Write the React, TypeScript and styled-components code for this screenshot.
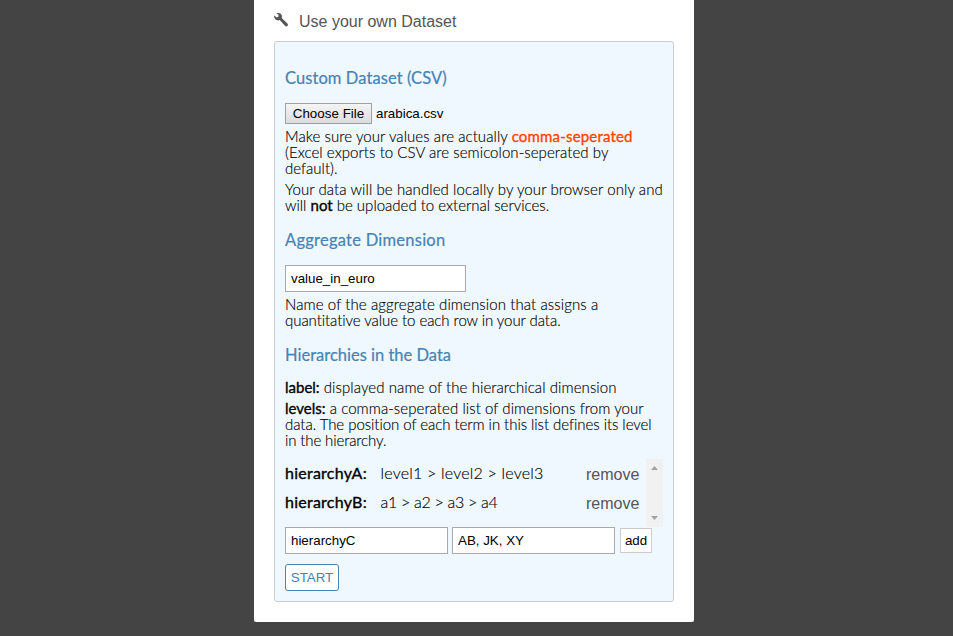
import React from 'react';
import styled, { createGlobalStyle } from 'styled-components';

const GlobalStyle = createGlobalStyle`
  * { box-sizing: border-box; }
  body { margin: 0; height: 636px; background: #444; overflow: hidden; }
`;

const sans = '"Liberation Sans", Arial, sans-serif';
const display = 'Lato, "Open Sans", sans-serif';

const Card = styled.main`
  width: 440px;
  height: 622px;
  margin: 0 auto 0 254px;
  padding: 0 20px;
  background: #fff;
  border-radius: 0 0 2px 2px;
`;

const TitleBar = styled.header`
  display: flex;
  height: 41px;
  color: #555;
  font: 16px/18px ${sans};
`;

const Wrench = styled.svg`
  width: 14px;
  height: 14px;
  margin: 13px 11px 0 0;
  flex: none;
`;

const Title = styled.span`
  margin-top: 13px;
`;

const Panel = styled.section`
  height: 561px;
  padding: 0 10px;
  border: 1px solid #ccc;
  border-radius: 3px;
  background: #f0f8ff;
`;

const Heading = styled.h2<{ $track: number; $top: number; $bottom?: number }>`
  margin: ${p => p.$top}px 0 ${p => p.$bottom ?? 15}px;
  font: 400 16.5px/20px ${display};
  letter-spacing: ${p => p.$track}px;
  color: #4682b4;
  -webkit-text-stroke: 0.2px #4682b4;
`;

const Paragraph = styled.p`
  margin: 4px 0 0;
  padding-bottom: 1px;
  font: 300 15px/16px ${display};
  color: #000;
  white-space: nowrap;
  -webkit-text-stroke: 0.15px #000;
`;

const Line = styled.span<{ $track?: number }>`
  display: block;
  height: 16px;
  letter-spacing: ${p => p.$track ?? 0}px;
`;

const Strong = styled.strong<{ $alert?: boolean; $track?: number }>`
  font-weight: 400;
  letter-spacing: ${p => p.$track ?? 0.1}px;
  color: ${p => (p.$alert ? '#ff4500' : '#000')};
  -webkit-text-stroke: 0.35px ${p => (p.$alert ? '#ff4500' : '#000')};
`;

const FileRow = styled.div`
  display: flex;
  height: 21px;
  font: 13.33px/22px ${sans};
  color: #000;
`;

const FileButton = styled.button`
  width: 87px;
  height: 21px;
  margin-right: 4px;
  padding: 0;
  border: 1px solid #a0a0a0;
  background: linear-gradient(#f5f5f5, #dcdcdc);
  color: #000;
  font: 13.33px/19px ${sans};
  letter-spacing: 0.04px;
`;

const TextInput = styled.input<{ $width: number }>`
  display: block;
  width: ${p => p.$width}px;
  height: 27px;
  padding: 0 5px;
  border: 1px solid #a9a9a9;
  border-radius: 0;
  outline: 0;
  background: #fff;
  color: #000;
  font: 13.33px ${sans};
`;

const ListBox = styled.div`
  display: flex;
  height: 68px;
  margin-top: 10px;
`;

const List = styled.div`
  flex: 1;
`;

const Item = styled.div`
  display: grid;
  grid-template-columns: 95.5px 205.5px 1fr;
  height: 29px;
  padding-bottom: 2px;
  align-items: center;
  font: 300 16px/20px ${display};
  white-space: nowrap;
  color: #000;
  -webkit-text-stroke: 0.15px #000;
`;

const Levels = styled.span<{ $track: number }>`
  letter-spacing: ${p => p.$track}px;
`;

const Remove = styled.span`
  font: 16px/20px ${sans};
  color: #555;
  -webkit-text-stroke: 0;
  padding-top: 4px;
`;

const Scrollbar = styled.div`
  display: flex;
  flex-direction: column;
  justify-content: space-between;
  align-items: center;
  width: 17px;
  padding: 7px 0;
  background: #f1f1f1;
`;

const Arrow = styled.svg`
  display: block;
  width: 7px;
  height: 4px;
  fill: #a3a3a3;
`;

const AddRow = styled.div`
  display: flex;
  gap: 4px;
  align-items: center;
`;

const AddButton = styled.button`
  width: 32px;
  height: 25px;
  margin-left: 1px;
  padding: 0;
  border: 1px solid #ccc;
  background: #fff;
  color: #000;
  font: 13.33px ${sans};
`;

const StartButton = styled.button`
  display: block;
  width: 54px;
  height: 27px;
  margin-top: 10px;
  padding: 0;
  border: 1px solid #4682b4;
  border-radius: 3px;
  background: #fff;
  color: #4682b4;
  font: 13.33px ${sans};
`;

const hierarchies = [
  { label: 'hierarchyA:', levels: 'level1 > level2 > level3', track: 0.2 },
  { label: 'hierarchyB:', levels: 'a1 > a2 > a3 > a4', track: -0.29 },
];

export default function App() {
  return (
    <>
      <GlobalStyle />
      <Card>
        <TitleBar>
          <Wrench viewBox="0 0 14 14">
            <path
              fill="#555"
              d="M.3 2.5 2.8 4.6 4.6 3.5 4.5 1.7 2.4.2C4.2-.4 6.500.1 7.500 1.800 8.100 2.900 8.100 4 7.700 5L13.400 10.400C14.200 11.200 14 12.300 13.400 12.900 12.700 13.600 11.700 13.500 11 12.800L5.700 7.100C4.100 7.700 2.400 7.300 1.300 6.200.300 5.200 0 3.800.300 2.500Z"
            />
          </Wrench>
          <Title>Use your own Dataset</Title>
        </TitleBar>
        <Panel>
          <Heading $top={26} $track={0.08}>Custom Dataset (CSV)</Heading>
          <FileRow>
            <FileButton>Choose File</FileButton>
            <span>arabica.csv</span>
          </FileRow>
          <Paragraph>
            <Line $track={0.07}>
              Make sure your values are actually <Strong $alert $track={0.18}>comma-seperated</Strong>
            </Line>
            <Line $track={0.06}>(Excel exports to CSV are semicolon-seperated by</Line>
            <Line>default).</Line>
          </Paragraph>
          <Paragraph>
            <Line $track={0.09}>Your data will be handled locally by your browser only and</Line>
            <Line>will <Strong $track={0}>not</Strong> be uploaded to external services.</Line>
          </Paragraph>
          <Heading $top={16} $track={0.25}>Aggregate Dimension</Heading>
          <TextInput $width={181} defaultValue="value_in_euro" />
          <Paragraph>
            <Line $track={0.1}>Name of the aggregate dimension that assigns a</Line>
            <Line $track={-0.06}>quantitative value to each row in your data.</Line>
          </Paragraph>
          <Heading $top={16} $bottom={14} $track={0}>Hierarchies in the Data</Heading>
          <Paragraph>
            <Line $track={0.08}>
              <Strong $track={0}>label:</Strong> displayed name of the hierarchical dimension
            </Line>
          </Paragraph>
          <Paragraph>
            <Line $track={0.07}>
              <Strong $track={0}>levels:</Strong> a comma-seperated list of dimensions from your
            </Line>
            <Line $track={-0.05}>data. The position of each term in this list defines its level</Line>
            <Line $track={-0.12}>in the hierarchy.</Line>
          </Paragraph>
          <ListBox>
            <List>
              {hierarchies.map(h => (
                <Item key={h.label}>
                  <Strong $track={0.25}>{h.label}</Strong>
                  <Levels $track={h.track}>{h.levels}</Levels>
                  <Remove>remove</Remove>
                </Item>
              ))}
            </List>
            <Scrollbar>
              <Arrow viewBox="0 0 7 4"><path d="M0 4 3.500 0 7 4Z" /></Arrow>
              <Arrow viewBox="0 0 7 4"><path d="M0 0 3.500 4 7 0Z" /></Arrow>
            </Scrollbar>
          </ListBox>
          <AddRow>
            <TextInput $width={163} defaultValue="hierarchyC" />
            <TextInput $width={163} defaultValue="AB, JK, XY" />
            <AddButton>add</AddButton>
          </AddRow>
          <StartButton>START</StartButton>
        </Panel>
      </Card>
    </>
  );
}
